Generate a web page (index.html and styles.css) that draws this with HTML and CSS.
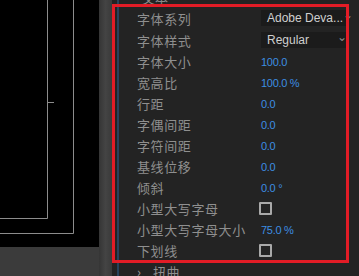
FILE: index.html
```html
<!DOCTYPE html>
<html lang="zh">
<head>
    <meta charset="UTF-8">
    <meta name="viewport" content="width=device-width, initial-scale=1.0">
    <title>字符属性</title>
    <link rel="stylesheet" href="styles.css">
</head>
<body>
    <div class="screen">
        <div class="viewer">
            <div class="canvas">
                <!-- 合成画面中的参考线 -->
                <svg width="99" height="247" viewBox="0 0 99 247">
                    <path d="M47.5 0 V218.5 H0" fill="none" stroke="#8c8c8c" stroke-width="1"/>
                    <path d="M48 102.5 H54" stroke="#8c8c8c" stroke-width="1"/>
                    <path d="M73.5 0 V233.5 H0" fill="none" stroke="#8c8c8c" stroke-width="1"/>
                </svg>
            </div>
        </div>
        <div class="divider"></div>

        <div class="panel">
            <div class="group-head"><span>文本</span></div>
            <div class="prop-list">
                <div class="prop-row tall">
                    <span class="prop-label">字体系列</span>
                    <div class="select">Adobe Deva...<span class="chev">⌄</span></div>
                </div>
                <div class="prop-row tall">
                    <span class="prop-label">字体样式</span>
                    <div class="select">Regular<span class="chev">⌄</span></div>
                </div>
                <div class="prop-row">
                    <span class="prop-label">字体大小</span>
                    <span class="prop-value">100.0</span>
                </div>
                <div class="prop-row">
                    <span class="prop-label">宽高比</span>
                    <span class="prop-value">100.0 %</span>
                </div>
                <div class="prop-row">
                    <span class="prop-label">行距</span>
                    <span class="prop-value">0.0</span>
                </div>
                <div class="prop-row">
                    <span class="prop-label">字偶间距</span>
                    <span class="prop-value">0.0</span>
                </div>
                <div class="prop-row">
                    <span class="prop-label">字符间距</span>
                    <span class="prop-value">0.0</span>
                </div>
                <div class="prop-row">
                    <span class="prop-label">基线位移</span>
                    <span class="prop-value">0.0</span>
                </div>
                <div class="prop-row">
                    <span class="prop-label">倾斜</span>
                    <span class="prop-value">0.0 °</span>
                </div>
                <div class="prop-row">
                    <span class="prop-label">小型大写字母</span>
                    <span class="checkbox"></span>
                </div>
                <div class="prop-row">
                    <span class="prop-label">小型大写字母大小</span>
                    <span class="prop-value">75.0 %</span>
                </div>
                <div class="prop-row">
                    <span class="prop-label">下划线</span>
                    <span class="checkbox"></span>
                </div>
                <div class="prop-row sub">
                    <span class="twirl">›</span>
                    <span class="prop-label">扭曲</span>
                </div>
            </div>
        </div>

        <!-- 红色标注框 -->
        <div class="highlight"></div>
    </div>
</body>
</html>
```

FILE: styles.css
```css
* {
    box-sizing: border-box;
    margin: 0;
    padding: 0;
}

body {
    font-family: 'Noto Sans CJK SC', 'Noto Sans', sans-serif;
    background: #1e1e1e;
    width: 359px;
    height: 276px;
    overflow: hidden;
}

.screen {
    position: relative;
    display: flex;
    width: 359px;
    height: 276px;
}

.viewer {
    width: 99px;
    background: #3b3b3b;
}

.canvas {
    height: 247px;
    background: #000;
}

.canvas svg {
    display: block;
}

.divider {
    width: 13px;
    background: linear-gradient(90deg, #353535 0%, #444 50%, #3a3a3a 100%);
}

.panel {
    flex: 1;
    background: #232323;
    border-left: 5px solid #232323;
    position: relative;
    overflow: hidden;
}

.panel::before {
    content: '';
    position: absolute;
    left: 0;
    top: 0;
    bottom: 0;
    width: 2px;
    background: #27425c;
}

.group-head {
    height: 7px;
    overflow: hidden;
    padding-left: 25px;
}

.group-head span {
    display: block;
    margin-top: -9px;
    font-size: 13px;
    line-height: 14px;
    color: #8a8a8a;
}

.prop-row {
    display: flex;
    align-items: center;
    height: 21px;
    padding-left: 20px;
}

.prop-row.tall {
    height: 22px;
}

.prop-label {
    width: 124px;
    flex: none;
    font-size: 13px;
    letter-spacing: 0.6px;
    color: #8f8f8f;
    white-space: nowrap;
}

.prop-value {
    font-family: 'Liberation Sans', Arial, sans-serif;
    font-size: 11px;
    color: #3d8ee2;
    letter-spacing: -0.3px;
}

.select {
    display: flex;
    align-items: center;
    justify-content: space-between;
    width: 88px;
    height: 16px;
    padding-left: 6px;
    padding-right: 2px;
    background: #1b1b1b;
    font-family: 'Liberation Sans', Arial, sans-serif;
    font-size: 12px;
    color: #cfcfcf;
    white-space: nowrap;
}

.chev {
    color: #8a8a8a;
    font-size: 12px;
    line-height: 8px;
    padding-bottom: 6px;
}

.checkbox {
    width: 13px;
    height: 13px;
    margin-left: -2px;
    border: 2px solid #a9a9a9;
    border-radius: 1px;
}

.prop-row.sub {
    padding-left: 20px;
}

.twirl {
    width: 16px;
    color: #9a9a9a;
    font-size: 13px;
}

.prop-row.sub .prop-label {
    width: auto;
}

.highlight {
    position: absolute;
    left: 112px;
    top: 4px;
    width: 237px;
    height: 259px;
    border: 3px solid #e21c26;
    pointer-events: none;
}
```
